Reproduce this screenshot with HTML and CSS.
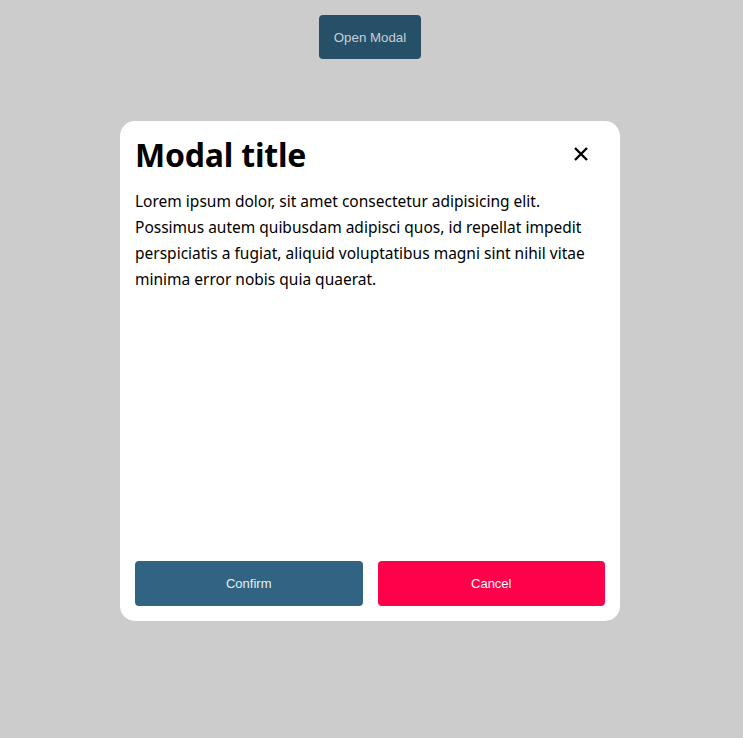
FILE: index.html
```html
<!DOCTYPE html>
<html>
<head>
<meta charset="utf-8">
<link rel="stylesheet" href="styles.css">
</head>
<body>
<div class="page">
  <button class="open-btn">Open Modal</button>
  <div class="modal">
    <div class="modal-header">
      <h1 class="modal-title">Modal title</h1>
      <button class="close-btn" aria-label="Close">
        <svg width="16" height="16" viewBox="0 0 16 16"><path d="M2 2 L14 14 M14 2 L2 14" stroke="#000" stroke-width="2.4" stroke-linecap="butt"/></svg>
      </button>
    </div>
    <p class="modal-body">Lorem ipsum dolor, sit amet consectetur adipisicing elit. Possimus autem quibusdam adipisci quos, id repellat impedit perspiciatis a fugiat, aliquid voluptatibus magni sint nihil vitae minima error nobis quia quaerat.</p>
    <div class="modal-footer">
      <button class="btn btn-confirm">Confirm</button>
      <button class="btn btn-cancel">Cancel</button>
    </div>
  </div>
</div>
</body>
</html>
```
FILE: styles.css
```css
html, body {
  margin: 0;
  padding: 0;
  background: #cccccc;
}
.page {
  display: flex;
  flex-direction: column;
  align-items: center;
  padding-top: 15px;
  padding-right: 3px;
}
.open-btn {
  width: 102px;
  height: 44px;
  border: none;
  border-radius: 4px;
  background: #265068;
  color: #c9cfd3;
  font-family: "Liberation Sans", Arial, sans-serif;
  font-size: 13.3px;
  cursor: pointer;
}
.modal {
  margin-top: 62px;
  width: 500px;
  height: 500px;
  box-sizing: border-box;
  background: #fff;
  border-radius: 15px;
  padding: 15px;
  display: flex;
  flex-direction: column;
  font-family: "Noto Sans", "Open Sans", sans-serif;
  color: #000;
}
.modal-header {
  display: flex;
  justify-content: space-between;
  align-items: center;
  height: 36px;
}
.modal-title {
  margin: 0;
  font-size: 32px;
  font-weight: 700;
  letter-spacing: -0.2px;
}
.close-btn {
  border: none;
  background: none;
  padding: 0;
  margin-right: 16px;
  width: 16px;
  height: 16px;
  display: flex;
}
.modal-body {
  margin: 16px 0 0;
  font-size: 15.5px;
  line-height: 26px;
  flex: 1;
}
.modal-footer {
  display: flex;
  gap: 15px;
}
.btn {
  flex: 1;
  height: 45px;
  border: none;
  border-radius: 4px;
  color: #fff;
  font-family: "Liberation Sans", Arial, sans-serif;
  font-size: 13px;
}
.btn-confirm {
  background: #316482;
  color: #e6eef3;
}
.btn-cancel {
  background: #ff004a;
}
```
